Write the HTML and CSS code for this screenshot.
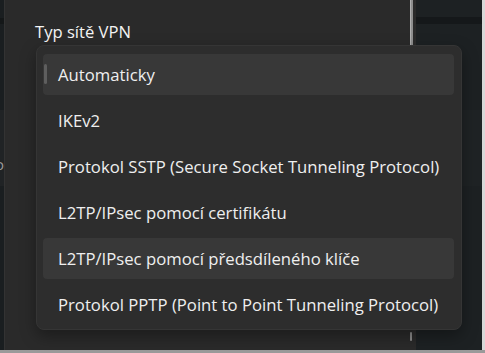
FILE: index.html
```html
<!DOCTYPE html>
<html lang="cs">
<head>
<meta charset="utf-8">
<link rel="stylesheet" href="styles.css">
</head>
<body>
<div class="window">
  <div class="left-strip">
    <div class="ls-band ls-band-top"></div>
    <div class="ls-band ls-band-mid"><span class="ls-glyph">o</span></div>
  </div>
  <div class="panel">
    <div class="label">Typ sítě VPN</div>
    <div class="scroll-top"></div>
    <div class="scroll-bottom"></div>
  </div>
  <div class="right-area">
    <div class="ra-band"></div>
    <div class="ra-mid"></div>
  </div>
  <div class="right-line"></div>
</div>
<div class="bottom-line"></div>

<ul class="popup">
  <li class="item selected"><span class="accent"></span>Automaticky</li>
  <li class="item">IKEv2</li>
  <li class="item">Protokol SSTP (Secure Socket Tunneling Protocol)</li>
  <li class="item">L2TP/IPsec pomocí certifikátu</li>
  <li class="item hover">L2TP/IPsec pomocí předsdíleného klíče</li>
  <li class="item">Protokol PPTP (Point to Point Tunneling Protocol)</li>
</ul>
</body>
</html>
```

FILE: styles.css
```css
* { box-sizing: border-box; }
html, body {
  margin: 0;
  padding: 0;
  width: 485px;
  height: 353px;
  overflow: hidden;
  background: #1d2123;
  font-family: "Open Sans", "Noto Sans", sans-serif;
}
.window {
  display: grid;
  grid-template-columns: 4px 412px 1fr 3px;
  height: 350px;
}
.left-strip {
  background: #1a1e20;
  position: relative;
  overflow: hidden;
}
.ls-band { position: absolute; left: 0; right: 0; }
.ls-band-top { top: 18px; height: 6px; background: #141718; }
.ls-band-mid { top: 110px; height: 76px; background: #202325; }
.ls-glyph {
  position: absolute;
  left: -5px;
  top: 44px;
  color: #9a9a9a;
  font-size: 15px;
}
.panel {
  background: #2a2a2a;
  border-left: 1px solid #333;
  position: relative;
}
.label {
  padding: 21px 0 0 30px;
  color: #f4f4f4;
  font-size: 16.6px;
  line-height: 22px;
}
.scroll-top {
  position: absolute;
  right: 3px;
  top: 0;
  width: 3px;
  height: 45px;
  background: #8e8e8e;
  border-left: 1px solid #b0b0b0;
}
.scroll-bottom {
  position: absolute;
  right: 4px;
  top: 332px;
  width: 2px;
  height: 9px;
  background: #8a8a8a;
  border-radius: 1px;
}
.right-area {
  position: relative;
  background: #1d2123;
}
.ra-band {
  position: absolute; left: 0; right: 0;
  top: 17px; height: 7px;
  background: #15181a;
}
.ra-mid {
  position: absolute; left: 0; right: 0;
  top: 110px; height: 76px;
  background: #1f2325;
}
.right-line { background: #d8d8d8; }
.bottom-line {
  height: 3px;
  background: #9a9a9a;
}

.popup {
  position: absolute;
  left: 36px;
  top: 45px;
  width: 426px;
  height: 285px;
  margin: 0;
  padding: 8px 7px 5px 6px;
  list-style: none;
  background: #2d2d2d;
  border: 1px solid #353535;
  border-radius: 8px;
  box-shadow: 0 6px 16px rgba(0,0,0,0.35);
  display: flex;
  flex-direction: column;
  gap: 5px;
}
.item {
  position: relative;
  height: 41px;
  flex: none;
  display: flex;
  align-items: center;
  padding-left: 15px;
  color: #efefef;
  font-size: 16.7px;
  border-radius: 4px;
  white-space: nowrap;
}
.item.selected, .item.hover { background: #383838; }
.accent {
  position: absolute;
  left: 1px;
  top: 10px;
  width: 3px;
  height: 20px;
  border-radius: 2px;
  background: #5e5e5e;
}
```
